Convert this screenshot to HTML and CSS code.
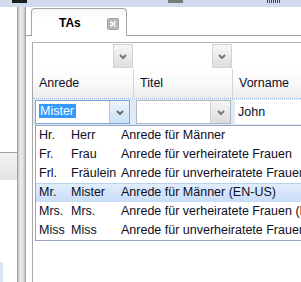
FILE: index.html
```html
<!DOCTYPE html>
<html lang="de">

<head>
  <meta charset="UTF-8">
  <title>TAs</title>
  <link rel="stylesheet" href="styles.css">
</head>

<body>
  <div class="topbar">
    <span class="mark markBlack"></span>
    <span class="mark markGrey"></span>
    <span class="mark markDots"></span>
  </div>

  <div class="main">
    <div class="sidebar">
      <div class="sideBtn"></div>
      <div class="sideFoot"></div>
    </div>
    <div class="splitter"></div>

    <div class="content">
      <div class="tabstrip">
        <div class="tab">
          <span class="tabTitle">TAs</span>
          <svg class="tabClose" width="12" height="12" viewBox="0 0 12 12">
            <rect x="0.5" y="0.5" width="11" height="11" rx="1" fill="#b9b9b9" stroke="#a2a2a2"/>
            <path d="M3.5 3.5 L8.5 8.5 M8.5 3.5 L3.5 8.5" stroke="#fff" stroke-width="1.6"/>
          </svg>
        </div>
      </div>

      <div class="panel">
        <div class="grid">
          <!-- filter row -->
          <div class="row filterRow">
            <div class="cell c1"><span class="filterBtn"><svg width="8" height="5"><polyline points="1,1 4,4 7,1" fill="none" stroke="#777" stroke-width="2"/></svg></span></div>
            <div class="cell c2"><span class="filterBtn"><svg width="8" height="5"><polyline points="1,1 4,4 7,1" fill="none" stroke="#777" stroke-width="2"/></svg></span></div>
            <div class="cell c3"></div>
          </div>

          <!-- header -->
          <div class="row headRow">
            <div class="cell c1">Anrede</div>
            <div class="cell c2">Titel</div>
            <div class="cell c3">Vorname</div>
          </div>

          <!-- edit row -->
          <div class="row editRow">
            <div class="cell c1">
              <div class="combo focused">
                <span class="comboText"><span class="selected">Mister</span></span>
                <span class="comboBtn"><svg width="8" height="5"><polyline points="1,1 4,4 7,1" fill="none" stroke="#666" stroke-width="2"/></svg></span>
              </div>
            </div>
            <div class="cell c2">
              <div class="combo">
                <span class="comboText"></span>
                <span class="comboBtn"><svg width="8" height="5"><polyline points="1,1 4,4 7,1" fill="none" stroke="#777" stroke-width="2"/></svg></span>
              </div>
            </div>
            <div class="cell c3">
              <div class="textField">John</div>
            </div>
          </div>

          <!-- dropdown list -->
          <div class="comboList">
            <div class="item"><span class="k">Hr.</span><span class="v">Herr</span><span class="d">Anrede für Männer</span></div>
            <div class="item"><span class="k">Fr.</span><span class="v">Frau</span><span class="d">Anrede für verheiratete Frauen</span></div>
            <div class="item"><span class="k">Frl.</span><span class="v">Fräulein</span><span class="d">Anrede für unverheiratete Frauen</span></div>
            <div class="item active"><span class="k">Mr.</span><span class="v">Mister</span><span class="d">Anrede für Männer (EN-US)</span></div>
            <div class="item"><span class="k">Mrs.</span><span class="v">Mrs.</span><span class="d">Anrede für verheiratete Frauen (EN-US)</span></div>
            <div class="item"><span class="k">Miss</span><span class="v">Miss</span><span class="d">Anrede für unverheiratete Frauen (EN-US)</span></div>
          </div>
        </div>
      </div>
    </div>
  </div>
</body>

</html>
```

FILE: styles.css
```css
body {
  margin: 0;
  width: 301px;
  height: 282px;
  overflow: hidden;
  font-family: "Liberation Sans", Arial, sans-serif;
  font-size: 12.5px;
  color: #0e0e26;
  background: #fff;
}

.topbar {
  height: 7px;
  background: #cfdbec;
  display: flex;
  align-items: flex-start;
}

.mark {
  display: block;
  height: 3px;
}

.markBlack {
  width: 15px;
  margin-left: 12px;
  background: #1c1c1c;
}

.markGrey {
  width: 15px;
  margin-left: 141px;
  background: #7a7a7a;
}

.markDots {
  width: 13px;
  margin-left: 84px;
  background: repeating-linear-gradient(to right, #444 0 1px, transparent 1px 2px);
}

.main {
  display: flex;
  height: 275px;
}

.sidebar {
  width: 17px;
  border-right: 1px solid #a4a4a4;
  display: flex;
  flex-direction: column;
}

.sideBtn {
  margin-top: 145px;
  height: 27px;
  border-top: 1px solid #a0a0a0;
  background: linear-gradient(#f2f2f2, #e4e4e4);
}

.sideFoot {
  margin-top: auto;
  width: 3px;
  height: 20px;
  background: #dbe5f4;
}

.splitter {
  width: 7px;
  border-right: 1px solid #9ca8b8;
  background: linear-gradient(to right, #c4c4c4, #ececec 35%, #e2e2e2 70%, #bdbdbd);
}

.content {
  flex: 1;
  display: flex;
  flex-direction: column;
  min-width: 0;
}

/* tabs */
.tabstrip {
  padding: 1px 0 0 5px;
  box-sizing: border-box;
  height: 29px;
  border-bottom: 1px solid #a3a3a3;
  display: flex;
  align-items: flex-end;
}

.tab {
  width: 96px;
  height: 28px;
  box-sizing: border-box;
  margin-bottom: -1px;
  border: 1px solid #a6a6a6;
  border-bottom: none;
  border-radius: 4px 4px 0 0;
  background: linear-gradient(#f6f6f6, #fff 40%);
  display: flex;
  align-items: center;
}

.tabTitle {
  font-size: 12px;
  font-weight: bold;
  margin-left: 27px;
  color: #000;
}

.tabClose {
  margin-left: auto;
  margin-right: 7px;
  margin-top: 2px;
}

.panel {
  flex: 1;
  padding: 6px 0 0 6px;
  min-width: 0;
}

/* grid */
.grid {
  position: relative;
  height: 100%;
  overflow: hidden;
  border-top: 1px solid #b4b4b4;
  border-left: 1px solid #a8a8a8;
}

.row {
  display: flex;
}

.cell {
  box-sizing: border-box;
}

.c1 {
  width: 101px;
  flex: none;
}

.c2 {
  width: 99px;
  flex: none;
}

.c3 {
  flex: 1;
  min-width: 0;
}

.filterRow {
  height: 26px;
  background: #fff;
}

.filterRow .c1,
.filterRow .c2 {
  display: flex;
  justify-content: flex-end;
  padding: 1px 1px 0 0;
}

.filterBtn {
  width: 20px;
  height: 24px;
  box-sizing: border-box;
  border: 1px solid #d2d2d2;
  background: linear-gradient(#f6f6f6, #dedede);
  display: flex;
  align-items: center;
  justify-content: center;
}

.headRow {
  height: 30px;
  line-height: 29px;
  border-bottom: 1px dotted #96b3de;
  box-sizing: border-box;
  background: linear-gradient(#fff, #fafafa 45%, #ebebeb);
}

.headRow .cell {
  padding-left: 6px;
  white-space: nowrap;
}

.headRow .c1,
.headRow .c2 {
  border-right: 1px solid #d4d4d4;
}

.editRow {
  height: 26px;
  background: #dfe8f5;
}

.editRow .cell {
  padding: 1px 0 1px 2px;
}

.combo {
  width: 95px;
  height: 24px;
  box-sizing: border-box;
  border: 1px solid #b3b7c4;
  background: #fff;
  display: flex;
}

.combo.focused {
  border-color: #7ea6d6;
}

.comboText {
  flex: 1;
  padding: 3px 0 0 3px;
}

.selected {
  display: inline-block;
  line-height: 14px;
  padding: 0 2px 0 1px;
  background: #3399ff;
  color: #fff;
}

.comboBtn {
  width: 20px;
  box-sizing: border-box;
  border-left: 1px solid #d0d0d0;
  background: linear-gradient(#f5f5f5, #dcdcdc);
  display: flex;
  align-items: center;
  justify-content: center;
}

.focused .comboBtn {
  border-left-color: #a9c6e8;
  background: linear-gradient(#eef5fd, #cbe0f6);
}

.textField {
  height: 24px;
  line-height: 24px;
  padding-left: 3px;
  background: #fff;
  white-space: nowrap;
}

/* dropdown list over the grid, runs out past the window edge */
.comboList {
  position: absolute;
  left: 2px;
  right: 0;
  top: 82px;
  overflow: hidden;
  border: 1px solid #95a6be;
  border-right: none;
  background: #fff;
}

.item {
  display: flex;
  height: 19px;
  line-height: 19px;
  padding-left: 3px;
  white-space: nowrap;
}

.item.active {
  background: linear-gradient(#e2eefc, #c8ddf8);
  box-shadow: inset 0 1px 0 #b9d1ef;
}

.k {
  width: 32px;
  flex: none;
}

.v {
  width: 50px;
  flex: none;
}
```
